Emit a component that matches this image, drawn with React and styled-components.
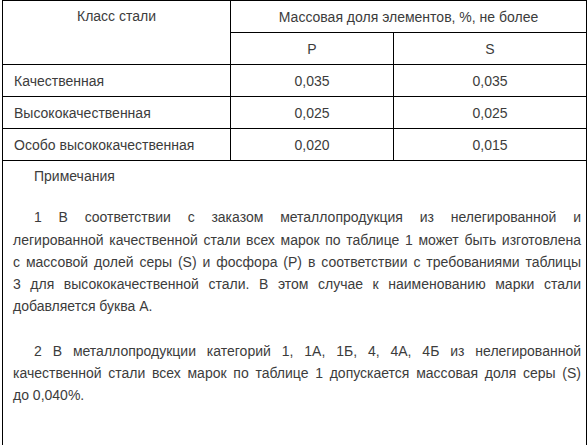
import React from "react";
import styled, { createGlobalStyle } from "styled-components";

const GlobalStyle = createGlobalStyle`
  html, body {
    margin: 0;
    padding: 0;
    background: #fff;
  }
`;

const Page = styled.div`
  padding: 0 0 0 2px;
  width: 586px;
  height: 445px;
  font-family: "Liberation Sans", Arial, sans-serif;
  font-size: 14px;
  color: #3c3c3c;
`;

const Table = styled.table`
  border-collapse: collapse;
  table-layout: fixed;
  width: 584px;
`;

const Cell = styled.td`
  border: 1px solid #000;
  height: 31px;
  padding: 0 11px;
  text-align: ${(p) => (p.$center ? "center" : "left")};
  vertical-align: ${(p) => (p.$top ? "top" : "middle")};
  line-height: ${(p) => (p.$top ? "31px" : "normal")};
  white-space: nowrap;
`;

const NotesCell = styled.td`
  border: 1px solid #000;
  height: 283px;
  padding: 4px 5px 0 10px;
  vertical-align: top;
  line-height: 22.3px;
`;

const Note = styled.div`
  margin: 0 0 ${(p) => p.$gap}px;
`;

const Line = styled.div`
  padding-left: ${(p) => (p.$first ? 21 : 0)}px;
  text-align: ${(p) => (p.$last ? "left" : "justify")};
  text-align-last: ${(p) => (p.$last ? "left" : "justify")};
  white-space: nowrap;
`;

const rows = [
  ["Качественная", "0,035", "0,035"],
  ["Высококачественная", "0,025", "0,025"],
  ["Особо высококачественная", "0,020", "0,015"],
];

const notes = [
  [
    "1 В соответствии с заказом металлопродукция из нелегированной и",
    "легированной качественной стали всех марок по таблице 1 может быть изготовлена",
    "с массовой долей серы (S) и фосфора (P) в соответствии с требованиями таблицы",
    "3 для высококачественной стали. В этом случае к наименованию марки стали",
    "добавляется буква А.",
  ],
  [
    "2 В металлопродукции категорий 1, 1А, 1Б, 4, 4А, 4Б из нелегированной",
    "качественной стали всех марок по таблице 1 допускается массовая доля серы (S)",
    "до 0,040%.",
  ],
];

export default function App() {
  return (
    <Page>
      <GlobalStyle />
      <Table>
        <colgroup>
          <col style={{ width: 228 }} />
          <col style={{ width: 163 }} />
          <col style={{ width: 193 }} />
        </colgroup>
        <tbody>
          <tr>
            <Cell rowSpan={2} $center $top>
              Класс стали
            </Cell>
            <Cell colSpan={2} $center>
              Массовая доля элементов, %, не более
            </Cell>
          </tr>
          <tr>
            <Cell $center>P</Cell>
            <Cell $center>S</Cell>
          </tr>
          {rows.map(([name, p, s]) => (
            <tr key={name}>
              <Cell>{name}</Cell>
              <Cell $center>{p}</Cell>
              <Cell $center>{s}</Cell>
            </tr>
          ))}
          <tr>
            <NotesCell colSpan={3}>
              <Note $gap={19}>
                <Line $first $last>Примечания</Line>
              </Note>
              {notes.map((lines, i) => (
                <Note key={i} $gap={22}>
                  {lines.map((text, j) => (
                    <Line key={j} $first={j === 0} $last={j === lines.length - 1}>
                      {text}
                    </Line>
                  ))}
                </Note>
              ))}
            </NotesCell>
          </tr>
        </tbody>
      </Table>
    </Page>
  );
}
